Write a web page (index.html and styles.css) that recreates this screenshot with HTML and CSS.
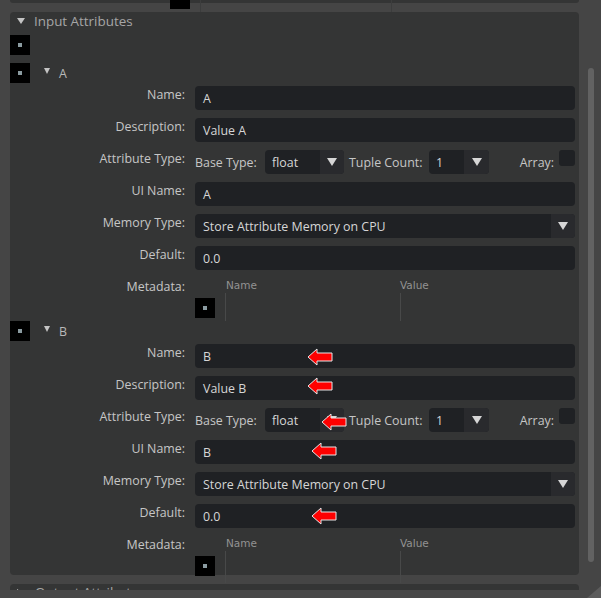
FILE: index.html
```html
<!DOCTYPE html>
<html>
<head>
<meta charset="utf-8">
<link rel="stylesheet" href="styles.css">
</head>
<body>
<div class="viewport">
  <div class="content">
    <div class="prev">
      <div class="prev-box"></div>
      <div class="prev-line first"></div>
      <div class="prev-line second"></div>
    </div>

    <section class="panel">
      <div class="panel-head"><span class="tri-down big"></span><span class="panel-title">Input Attributes</span></div>
      <div class="sq top-sq"></div>

      <div class="attr-head"><div class="sq"></div><span class="tri-down small"></span><span class="attr-name">A</span></div>
      <div class="rows">
        <div class="row"><div class="label">Name:</div><div class="field">A</div></div>
        <div class="row"><div class="label">Description:</div><div class="field">Value A</div></div>
        <div class="row">
          <div class="label">Attribute Type:</div>
          <div class="attr-type">
            <span class="sub-label base">Base Type:</span>
            <div class="combo base-combo"><span class="combo-text">float</span><span class="combo-btn"><span class="arrow"></span></span></div>
            <span class="sub-label tuple">Tuple Count:</span>
            <div class="combo tuple-combo"><span class="combo-text">1</span><span class="combo-btn"><span class="arrow"></span></span></div>
            <span class="sub-label array">Array:</span>
            <span class="checkbox"></span>
          </div>
        </div>
        <div class="row"><div class="label">UI Name:</div><div class="field">A</div></div>
        <div class="row"><div class="label">Memory Type:</div><div class="combo wide"><span class="combo-text">Store Attribute Memory on CPU</span><span class="combo-btn"><span class="arrow"></span></span></div></div>
        <div class="row"><div class="label">Default:</div><div class="field">0.0</div></div>
        <div class="meta">
          <div class="label">Metadata:</div>
          <div class="meta-table">
            <div class="mh"></div><div class="mh name">Name</div><div class="mh">Value</div>
            <div class="mb"><div class="sq"></div></div><div class="mb line"></div><div class="mb line"></div>
          </div>
        </div>
      </div>

      <div class="attr-head b"><div class="sq"></div><span class="tri-down small"></span><span class="attr-name">B</span></div>
      <div class="rows">
        <div class="row"><div class="label">Name:</div><div class="field">B</div></div>
        <div class="row"><div class="label">Description:</div><div class="field">Value B</div></div>
        <div class="row">
          <div class="label">Attribute Type:</div>
          <div class="attr-type">
            <span class="sub-label base">Base Type:</span>
            <div class="combo base-combo"><span class="combo-text">float</span><span class="combo-btn"><span class="arrow"></span></span></div>
            <span class="sub-label tuple">Tuple Count:</span>
            <div class="combo tuple-combo"><span class="combo-text">1</span><span class="combo-btn"><span class="arrow"></span></span></div>
            <span class="sub-label array">Array:</span>
            <span class="checkbox"></span>
          </div>
        </div>
        <div class="row"><div class="label">UI Name:</div><div class="field">B</div></div>
        <div class="row"><div class="label">Memory Type:</div><div class="combo wide"><span class="combo-text">Store Attribute Memory on CPU</span><span class="combo-btn"><span class="arrow"></span></span></div></div>
        <div class="row"><div class="label">Default:</div><div class="field">0.0</div></div>
        <div class="meta last">
          <div class="label">Metadata:</div>
          <div class="meta-table">
            <div class="mh"></div><div class="mh name">Name</div><div class="mh">Value</div>
            <div class="mb"><div class="sq"></div></div><div class="mb line"></div><div class="mb line"></div>
          </div>
        </div>
      </div>
    </section>

    <section class="panel next">
      <div class="panel-head"><span class="tri-right"></span><span class="panel-title">Output Attributes</span></div>
    </section>
  </div>
  <div class="vscroll"><div class="thumb"></div></div>
</div>
<div class="bottom-bar"></div>

<svg class="grip" width="14" height="12" viewBox="0 0 14 12"><polygon points="14,0 14,12 0,12" fill="#5c5c5c"/></svg>

<svg class="red-arrow a1" width="26" height="18" viewBox="0 0 26 18"><polygon points="1,9 10,1 10,5 25,5 25,13 10,13 10,17" fill="#ff0000" stroke="#e6e6e6" stroke-width="1"/></svg>
<svg class="red-arrow a2" width="26" height="18" viewBox="0 0 26 18"><polygon points="1,9 10,1 10,5 25,5 25,13 10,13 10,17" fill="#ff0000" stroke="#e6e6e6" stroke-width="1"/></svg>
<svg class="red-arrow a3" width="26" height="18" viewBox="0 0 26 18"><polygon points="1,9 10,1 10,5 25,5 25,13 10,13 10,17" fill="#ff0000" stroke="#e6e6e6" stroke-width="1"/></svg>
<svg class="red-arrow a4" width="26" height="18" viewBox="0 0 26 18"><polygon points="1,9 10,1 10,5 25,5 25,13 10,13 10,17" fill="#ff0000" stroke="#e6e6e6" stroke-width="1"/></svg>
<svg class="red-arrow a5" width="26" height="18" viewBox="0 0 26 18"><polygon points="1,9 10,1 10,5 25,5 25,13 10,13 10,17" fill="#ff0000" stroke="#e6e6e6" stroke-width="1"/></svg>
</body>
</html>
```

FILE: styles.css
```css
html, body {
  margin: 0;
  padding: 0;
}
body {
  width: 601px;
  height: 598px;
  overflow: hidden;
  background: #454545;
  font-family: "Open Sans", "DejaVu Sans", sans-serif;
  position: relative;
}
.viewport {
  display: flex;
  height: 590px;
  overflow: hidden;
}
.content {
  width: 579px;
  flex: none;
}
.vscroll {
  flex: 1;
  padding: 68px 0 0 9px;
}
.thumb {
  width: 6px;
  height: 494px;
  background: #626262;
  border-radius: 3px;
}

/* previous section remnant */
.prev {
  margin-left: 10px;
  width: 569px;
  height: 3px;
  background: #343535;
  border-radius: 0 0 4px 4px;
  display: flex;
  align-items: flex-start;
  margin-bottom: 9px;
}
.prev-box {
  margin-left: 160px;
  width: 20px;
  height: 9px;
  background: #000;
  flex: none;
}
.prev-line {
  width: 1px;
  height: 12px;
  background: #3c3d3d;
  flex: none;
}
.prev-line.first { margin-left: 10px; }
.prev-line.second { margin-left: 190px; }

/* panel */
.panel {
  margin-left: 10px;
  width: 569px;
  height: 563px;
  background: #343535;
  border-radius: 4px;
}
.panel.next {
  margin-top: 9px;
  height: 30px;
}
.panel-head {
  height: 23px;
  display: flex;
  align-items: flex-start;
  padding-left: 7px;
}
.panel-title {
  font-size: 13.4px;
  line-height: 18px;
  color: #a6a6a6;
  white-space: nowrap;
}
.tri-down {
  width: 0;
  height: 0;
  flex: none;
}
.tri-down.big {
  border-left: 4px solid transparent;
  border-right: 4px solid transparent;
  border-top: 6px solid #c4c4c4;
  margin-top: 6px;
  margin-right: 9px;
}
.tri-down.small {
  border-left: 3.5px solid transparent;
  border-right: 3.5px solid transparent;
  border-top: 6px solid #c4c4c4;
  margin: 5px 9px 0 14px;
}
.tri-right {
  width: 0;
  height: 0;
  border-top: 4px solid transparent;
  border-bottom: 4px solid transparent;
  border-left: 6px solid #c4c4c4;
  margin-top: 5px;
  margin-right: 12px;
}
.next .panel-title { margin-top: -1px; }

.sq {
  width: 20px;
  height: 20px;
  background: #000;
  display: flex;
  align-items: center;
  justify-content: center;
  flex: none;
}
.sq::after {
  content: "";
  width: 4px;
  height: 4px;
  background: #8b9ba1;
}
.top-sq { margin-bottom: 8px; }

.attr-head {
  display: flex;
  align-items: flex-start;
  height: 20px;
  margin-bottom: 3px;
}
.attr-name {
  font-size: 12.4px;
  line-height: 16px;
  margin-top: 3px;
  color: #b9b9b9;
}

.rows {
  display: flex;
  flex-direction: column;
  gap: 8px;
  padding-right: 4px;
}
.row {
  display: flex;
  height: 24px;
}
.label {
  width: 175px;
  margin-right: 10px;
  flex: none;
  text-align: right;
  font-size: 12.4px;
  line-height: 16px;
  padding-top: 1px;
  color: #c6c6c6;
}
.field {
  flex: 1;
  box-sizing: border-box;
  height: 24px;
  background: #1f2124;
  border-radius: 4px;
  font-size: 12.4px;
  line-height: 24px;
  padding: 1px 0 0 8px;
  overflow: hidden;
  color: #d6d6d6;
}
.attr-type {
  flex: 1;
  display: flex;
  align-items: center;
}
.sub-label {
  font-size: 12.4px;
  line-height: 24px;
  padding-top: 1px;
  height: 24px;
  box-sizing: border-box;
  color: #c6c6c6;
  flex: none;
  white-space: nowrap;
}
.sub-label.base { width: 70px; }
.sub-label.tuple { width: 80px; margin-left: 5px; }
.sub-label.array { margin-left: auto; margin-right: 5px; }
.combo {
  display: flex;
  height: 24px;
  border-radius: 4px;
  background: #1f2124;
  overflow: hidden;
  flex: none;
}
.combo.wide { flex: 1; }
.base-combo { width: 79px; }
.tuple-combo { width: 60px; }
.combo-text {
  flex: 1;
  font-size: 12.4px;
  line-height: 24px;
  padding: 1px 0 0 7px;
  color: #d6d6d6;
  white-space: nowrap;
}
.combo.wide .combo-text { padding-left: 8px; }
.combo-btn {
  width: 24px;
  flex: none;
  background: #292a2d;
  display: flex;
  align-items: center;
  justify-content: center;
}
.tuple-combo .combo-btn { width: 25px; }
.arrow {
  width: 0;
  height: 0;
  border-left: 5px solid transparent;
  border-right: 5px solid transparent;
  border-top: 8px solid #d6d6d6;
}
.checkbox {
  align-self: flex-start;
  width: 16px;
  height: 16px;
  border-radius: 3px;
  background: #1f2124;
  flex: none;
}

/* metadata */
.meta {
  display: flex;
  height: 43px;
}
.meta-table {
  flex: 1;
  display: grid;
  grid-template-columns: 30px 175px 1fr;
  grid-template-rows: 15px 28px;
}
.meta.last .meta-table { grid-template-rows: 15px 32px; }
.mh {
  font-family: "DejaVu Sans", sans-serif;
  font-size: 10.5px;
  line-height: 15px;
  color: #929292;
}
.mh.name { padding-left: 1px; }
.mb { padding-top: 5px; }
.mb.line {
  padding: 0;
  border-left: 1px solid #484949;
}

.bottom-bar {
  height: 8px;
  background: #474747;
}
.grip {
  position: absolute;
  right: 0;
  bottom: 0;
}
.red-arrow {
  position: absolute;
}
.a1 { left: 307px; top: 348px; }
.a2 { left: 307px; top: 377px; }
.a3 { left: 321px; top: 413px; }
.a4 { left: 311px; top: 442px; }
.a5 { left: 311px; top: 507px; }
```
